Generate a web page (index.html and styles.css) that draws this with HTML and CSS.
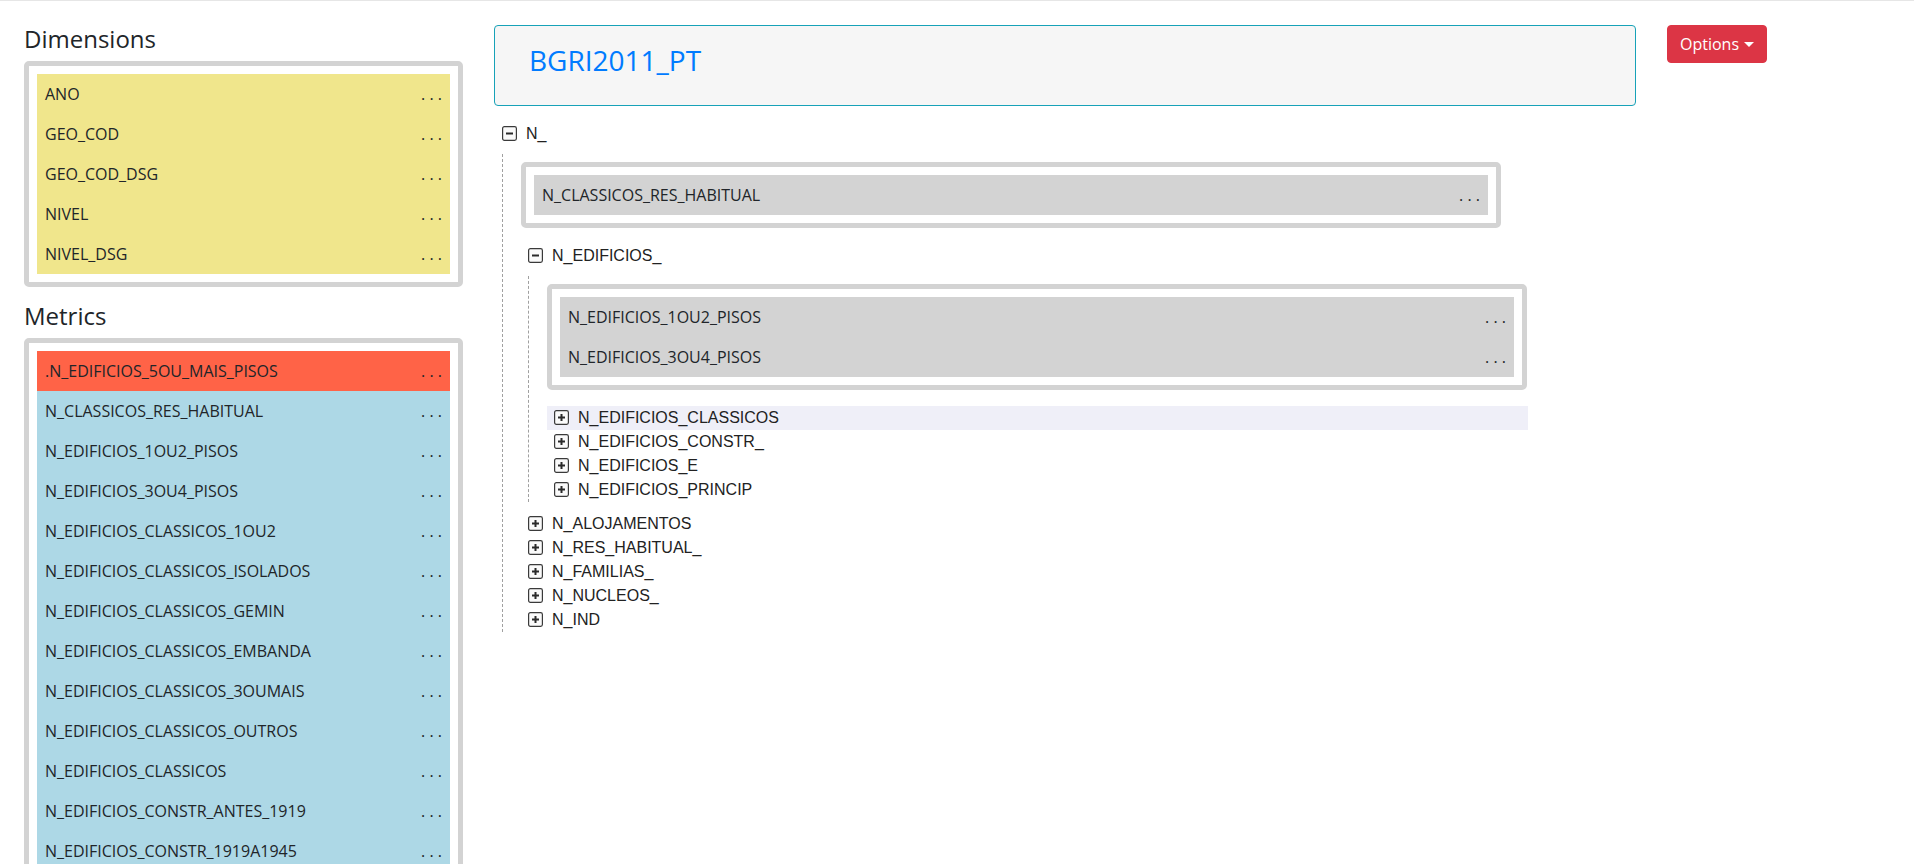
FILE: index.html
```html
<!DOCTYPE html>
<html lang="en">
<head>
<meta charset="utf-8">
<title>BGRI2011_PT</title>
<link rel="stylesheet" href="styles.css">
</head>
<body>
<div class="page">
  <aside class="side">
    <h4 class="side-title">Dimensions</h4>
    <div class="box">
      <div class="item dim"><span>ANO</span><span class="dots">. . .</span></div>
      <div class="item dim"><span>GEO_COD</span><span class="dots">. . .</span></div>
      <div class="item dim"><span>GEO_COD_DSG</span><span class="dots">. . .</span></div>
      <div class="item dim"><span>NIVEL</span><span class="dots">. . .</span></div>
      <div class="item dim"><span>NIVEL_DSG</span><span class="dots">. . .</span></div>
    </div>
    <h4 class="side-title">Metrics</h4>
    <div class="box">
      <div class="item sel"><span>.N_EDIFICIOS_5OU_MAIS_PISOS</span><span class="dots">. . .</span></div>
      <div class="item met"><span>N_CLASSICOS_RES_HABITUAL</span><span class="dots">. . .</span></div>
      <div class="item met"><span>N_EDIFICIOS_1OU2_PISOS</span><span class="dots">. . .</span></div>
      <div class="item met"><span>N_EDIFICIOS_3OU4_PISOS</span><span class="dots">. . .</span></div>
      <div class="item met"><span>N_EDIFICIOS_CLASSICOS_1OU2</span><span class="dots">. . .</span></div>
      <div class="item met"><span>N_EDIFICIOS_CLASSICOS_ISOLADOS</span><span class="dots">. . .</span></div>
      <div class="item met"><span>N_EDIFICIOS_CLASSICOS_GEMIN</span><span class="dots">. . .</span></div>
      <div class="item met"><span>N_EDIFICIOS_CLASSICOS_EMBANDA</span><span class="dots">. . .</span></div>
      <div class="item met"><span>N_EDIFICIOS_CLASSICOS_3OUMAIS</span><span class="dots">. . .</span></div>
      <div class="item met"><span>N_EDIFICIOS_CLASSICOS_OUTROS</span><span class="dots">. . .</span></div>
      <div class="item met"><span>N_EDIFICIOS_CLASSICOS</span><span class="dots">. . .</span></div>
      <div class="item met"><span>N_EDIFICIOS_CONSTR_ANTES_1919</span><span class="dots">. . .</span></div>
      <div class="item met"><span>N_EDIFICIOS_CONSTR_1919A1945</span><span class="dots">. . .</span></div>
      <div class="item met"><span>N_EDIFICIOS_CONSTR_1946A1960</span><span class="dots">. . .</span></div>
      <div class="item met"><span>N_EDIFICIOS_CONSTR_1961A1970</span><span class="dots">. . .</span></div>
      <div class="item met"><span>N_EDIFICIOS_CONSTR_1971A1980</span><span class="dots">. . .</span></div>
      <div class="item met"><span>N_EDIFICIOS_CONSTR_1981A1990</span><span class="dots">. . .</span></div>
      <div class="item met"><span>N_EDIFICIOS_CONSTR_1991A1995</span><span class="dots">. . .</span></div>
      <div class="item met"><span>N_EDIFICIOS_CONSTR_1996A2000</span><span class="dots">. . .</span></div>
      <div class="item met"><span>N_EDIFICIOS_CONSTR_2001A2005</span><span class="dots">. . .</span></div>
      <div class="item met"><span>N_EDIFICIOS_CONSTR_2006A2011</span><span class="dots">. . .</span></div>
      <div class="item met"><span>N_EDIFICIOS_ESTRUT_BETAO</span><span class="dots">. . .</span></div>
      <div class="item met"><span>N_EDIFICIOS_ESTRUT_COM_PLACA</span><span class="dots">. . .</span></div>
      <div class="item met"><span>N_EDIFICIOS_ESTRUT_SEM_PLACA</span><span class="dots">. . .</span></div>
      <div class="item met"><span>N_EDIFICIOS_ESTRUT_ADOBE_PEDRA</span><span class="dots">. . .</span></div>
      <div class="item met"><span>N_EDIFICIOS_ESTRUT_OUTRA</span><span class="dots">. . .</span></div>
      <div class="item met"><span>N_EDIFICIOS_EXCLUSIV_RESID</span><span class="dots">. . .</span></div>
      <div class="item met"><span>N_EDIFICIOS_PRINCIPAL_RESID</span><span class="dots">. . .</span></div>
      <div class="item met"><span>N_EDIFICIOS_PRINCIP_NAO_RESID</span><span class="dots">. . .</span></div>
      <div class="item met"><span>N_ALOJAMENTOS</span><span class="dots">. . .</span></div>
      <div class="item met"><span>N_ALOJAMENTOS_FAMILIARES</span><span class="dots">. . .</span></div>
      <div class="item met"><span>N_ALOJAMENTOS_FAM_CLASS_RHABITUAL</span><span class="dots">. . .</span></div>
      <div class="item met"><span>N_ALOJAMENTOS_FAM_CLASS_VAGOS</span><span class="dots">. . .</span></div>
      <div class="item met"><span>N_RES_HABITUAL_COM_AGUA</span><span class="dots">. . .</span></div>
      <div class="item met"><span>N_RES_HABITUAL_COM_RETRETE</span><span class="dots">. . .</span></div>
      <div class="item met"><span>N_RES_HABITUAL_COM_ESGOTOS</span><span class="dots">. . .</span></div>
      <div class="item met"><span>N_RES_HABITUAL_COM_BANHO</span><span class="dots">. . .</span></div>
      <div class="item met"><span>N_RES_HABITUAL_AREA_50</span><span class="dots">. . .</span></div>
      <div class="item met"><span>N_RES_HABITUAL_AREA_50_100</span><span class="dots">. . .</span></div>
      <div class="item met"><span>N_RES_HABITUAL_AREA_100_200</span><span class="dots">. . .</span></div>
      <div class="item met"><span>N_RES_HABITUAL_AREA_200</span><span class="dots">. . .</span></div>
      <div class="item met"><span>N_RES_HABITUAL_1_2_DIV</span><span class="dots">. . .</span></div>
      <div class="item met"><span>N_RES_HABITUAL_3_4_DIV</span><span class="dots">. . .</span></div>
      <div class="item met"><span>N_RES_HABITUAL_ESTAC_1</span><span class="dots">. . .</span></div>
      <div class="item met"><span>N_RES_HABITUAL_ESTAC_2</span><span class="dots">. . .</span></div>
      <div class="item met"><span>N_RES_HABITUAL_ESTAC_3</span><span class="dots">. . .</span></div>
      <div class="item met"><span>N_RES_HABITUAL_PROP_OCUP</span><span class="dots">. . .</span></div>
      <div class="item met"><span>N_RES_HABITUAL_ARREND</span><span class="dots">. . .</span></div>
      <div class="item met"><span>N_FAMILIAS_CLASSICAS</span><span class="dots">. . .</span></div>
      <div class="item met"><span>N_FAMILIAS_INSTITUCIONAIS</span><span class="dots">. . .</span></div>
      <div class="item met"><span>N_FAMILIAS_CLASSICAS_1OU2_PESS</span><span class="dots">. . .</span></div>
      <div class="item met"><span>N_FAMILIAS_CLASSICAS_3OU4_PESS</span><span class="dots">. . .</span></div>
      <div class="item met"><span>N_FAMILIAS_CLASSICAS_NPES65</span><span class="dots">. . .</span></div>
      <div class="item met"><span>N_FAMILIAS_CLASSICAS_NPES14</span><span class="dots">. . .</span></div>
      <div class="item met"><span>N_FAMILIAS_CLASSIC_SEM_DESEMP</span><span class="dots">. . .</span></div>
      <div class="item met"><span>N_FAMILIAS_CLASSIC_1DESEMPREG</span><span class="dots">. . .</span></div>
      <div class="item met"><span>N_FAMILIAS_CLASS_2MAIS_DESEMP</span><span class="dots">. . .</span></div>
      <div class="item met"><span>N_NUCLEOS_FAMILIARES</span><span class="dots">. . .</span></div>
      <div class="item met"><span>N_NUCLEOS_1FILH_NAO_CASADO</span><span class="dots">. . .</span></div>
      <div class="item met"><span>N_NUCLEOS_2FILH_NAO_CASADO</span><span class="dots">. . .</span></div>
      <div class="item met"><span>N_NUCLEOS_FILH_INF_6ANOS</span><span class="dots">. . .</span></div>
      <div class="item met"><span>N_NUCLEOS_FILH_INF_15ANOS</span><span class="dots">. . .</span></div>
      <div class="item met"><span>N_NUCLEOS_FILH_MAIS_15ANOS</span><span class="dots">. . .</span></div>
      <div class="item met"><span>N_INDIVIDUOS_PRESENT</span><span class="dots">. . .</span></div>
      <div class="item met"><span>N_INDIVIDUOS_PRESENT_H</span><span class="dots">. . .</span></div>
      <div class="item met"><span>N_INDIVIDUOS_PRESENT_M</span><span class="dots">. . .</span></div>
      <div class="item met"><span>N_INDIVIDUOS_RESIDENT</span><span class="dots">. . .</span></div>
      <div class="item met"><span>N_INDIVIDUOS_RESIDENT_H</span><span class="dots">. . .</span></div>
      <div class="item met"><span>N_INDIVIDUOS_RESIDENT_M</span><span class="dots">. . .</span></div>
      <div class="item met"><span>N_INDIVIDUOS_RESIDENT_0A4</span><span class="dots">. . .</span></div>
      <div class="item met"><span>N_INDIVIDUOS_RESIDENT_5A9</span><span class="dots">. . .</span></div>
      <div class="item met"><span>N_INDIVIDUOS_RESIDENT_10A13</span><span class="dots">. . .</span></div>
      <div class="item met"><span>N_INDIVIDUOS_RESIDENT_14A19</span><span class="dots">. . .</span></div>
      <div class="item met"><span>N_INDIVIDUOS_RESIDENT_20A24</span><span class="dots">. . .</span></div>
      <div class="item met"><span>N_INDIVIDUOS_RESIDENT_25A64</span><span class="dots">. . .</span></div>
      <div class="item met"><span>N_INDIVIDUOS_RESIDENT_65</span><span class="dots">. . .</span></div>
    </div>
  </aside>

  <main class="main">
    <div class="title-box">
      <h3 class="title">BGRI2011_PT</h3>
    </div>

    <div class="tree">
      <div class="node">
        <div class="row">
          <svg class="tog" width="15" height="15" viewBox="0 0 15 15"><rect x="0.6" y="0.6" width="13.8" height="13.8" rx="1.8" fill="#fafafa" stroke="#3a3a3a" stroke-width="1.2"/><path d="M4 7.5H11" stroke="#2a2a2a" stroke-width="2"/></svg>
          <span class="label">N_</span>
        </div>
        <div class="children">
          <div class="box tbox">
            <div class="item gry"><span>N_CLASSICOS_RES_HABITUAL</span><span class="dots">. . .</span></div>
          </div>
          <div class="node">
            <div class="row">
              <svg class="tog" width="15" height="15" viewBox="0 0 15 15"><rect x="0.6" y="0.6" width="13.8" height="13.8" rx="1.8" fill="#fafafa" stroke="#3a3a3a" stroke-width="1.2"/><path d="M4 7.5H11" stroke="#2a2a2a" stroke-width="2"/></svg>
              <span class="label">N_EDIFICIOS_</span>
            </div>
            <div class="children inner">
              <div class="box tbox">
                <div class="item gry"><span>N_EDIFICIOS_1OU2_PISOS</span><span class="dots">. . .</span></div>
                <div class="item gry"><span>N_EDIFICIOS_3OU4_PISOS</span><span class="dots">. . .</span></div>
              </div>
              <div class="row hover">
                <svg class="tog" width="15" height="15" viewBox="0 0 15 15"><rect x="0.6" y="0.6" width="13.8" height="13.8" rx="1.8" fill="#fafafa" stroke="#3a3a3a" stroke-width="1.2"/><path d="M4 7.5H11M7.5 4V11" stroke="#2a2a2a" stroke-width="2"/></svg>
                <span class="label">N_EDIFICIOS_CLASSICOS</span>
              </div>
              <div class="row">
                <svg class="tog" width="15" height="15" viewBox="0 0 15 15"><rect x="0.6" y="0.6" width="13.8" height="13.8" rx="1.8" fill="#fafafa" stroke="#3a3a3a" stroke-width="1.2"/><path d="M4 7.5H11M7.5 4V11" stroke="#2a2a2a" stroke-width="2"/></svg>
                <span class="label">N_EDIFICIOS_CONSTR_</span>
              </div>
              <div class="row">
                <svg class="tog" width="15" height="15" viewBox="0 0 15 15"><rect x="0.6" y="0.6" width="13.8" height="13.8" rx="1.8" fill="#fafafa" stroke="#3a3a3a" stroke-width="1.2"/><path d="M4 7.5H11M7.5 4V11" stroke="#2a2a2a" stroke-width="2"/></svg>
                <span class="label">N_EDIFICIOS_E</span>
              </div>
              <div class="row">
                <svg class="tog" width="15" height="15" viewBox="0 0 15 15"><rect x="0.6" y="0.6" width="13.8" height="13.8" rx="1.8" fill="#fafafa" stroke="#3a3a3a" stroke-width="1.2"/><path d="M4 7.5H11M7.5 4V11" stroke="#2a2a2a" stroke-width="2"/></svg>
                <span class="label">N_EDIFICIOS_PRINCIP</span>
              </div>
            </div>
          </div>
          <div class="row">
            <svg class="tog" width="15" height="15" viewBox="0 0 15 15"><rect x="0.6" y="0.6" width="13.8" height="13.8" rx="1.8" fill="#fafafa" stroke="#3a3a3a" stroke-width="1.2"/><path d="M4 7.5H11M7.5 4V11" stroke="#2a2a2a" stroke-width="2"/></svg>
            <span class="label">N_ALOJAMENTOS</span>
          </div>
          <div class="row">
            <svg class="tog" width="15" height="15" viewBox="0 0 15 15"><rect x="0.6" y="0.6" width="13.8" height="13.8" rx="1.8" fill="#fafafa" stroke="#3a3a3a" stroke-width="1.2"/><path d="M4 7.5H11M7.5 4V11" stroke="#2a2a2a" stroke-width="2"/></svg>
            <span class="label">N_RES_HABITUAL_</span>
          </div>
          <div class="row">
            <svg class="tog" width="15" height="15" viewBox="0 0 15 15"><rect x="0.6" y="0.6" width="13.8" height="13.8" rx="1.8" fill="#fafafa" stroke="#3a3a3a" stroke-width="1.2"/><path d="M4 7.5H11M7.5 4V11" stroke="#2a2a2a" stroke-width="2"/></svg>
            <span class="label">N_FAMILIAS_</span>
          </div>
          <div class="row">
            <svg class="tog" width="15" height="15" viewBox="0 0 15 15"><rect x="0.6" y="0.6" width="13.8" height="13.8" rx="1.8" fill="#fafafa" stroke="#3a3a3a" stroke-width="1.2"/><path d="M4 7.5H11M7.5 4V11" stroke="#2a2a2a" stroke-width="2"/></svg>
            <span class="label">N_NUCLEOS_</span>
          </div>
          <div class="row">
            <svg class="tog" width="15" height="15" viewBox="0 0 15 15"><rect x="0.6" y="0.6" width="13.8" height="13.8" rx="1.8" fill="#fafafa" stroke="#3a3a3a" stroke-width="1.2"/><path d="M4 7.5H11M7.5 4V11" stroke="#2a2a2a" stroke-width="2"/></svg>
            <span class="label">N_IND</span>
          </div>
        </div>
      </div>
    </div>
  </main>

  <div class="actions">
    <button class="btn-options" type="button">Options<span class="caret"></span></button>
  </div>
</div>
</body>
</html>
```

FILE: styles.css
```css
html {
  font-size: 16px;
  overflow-y: scroll;
}

body {
  margin: 0;
  font-family: "Open Sans", "Liberation Sans", sans-serif;
  font-size: 16px;
  line-height: 1.5;
  color: #212529;
  background: #fff;
  border-top: 1px solid #e6e6e6;
}

::-webkit-scrollbar {
  width: 12px;
}
::-webkit-scrollbar-track {
  background: #f1f1f1;
}
::-webkit-scrollbar-thumb {
  background: #c1c1c1;
  border-left: 2px solid #f1f1f1;
}

.page {
  display: flex;
  align-items: flex-start;
  padding: 24px 0 0 24px;
}

/* ---------- left column ---------- */
.side {
  width: 439px;
  flex: none;
}

.side-title {
  margin: 0 0 7px;
  font-size: 24px;
  font-weight: 400;
  line-height: 1.2;
  color: #212529;
}

.box {
  border: 5px solid #d3d3d3;
  border-radius: 5px;
  padding: 8px;
  margin-bottom: 15px;
}

.item {
  display: flex;
  justify-content: space-between;
  align-items: baseline;
  padding: 8px;
  line-height: 24px;
  font-size: 16px;
  color: #212529;
  white-space: nowrap;
}

.dots {
  color: #212529;
}

.dim { background: #f0e68c; }
.sel { background: #ff6347; }
.met { background: #add8e6; }
.gry { background: #d3d3d3; }

/* ---------- main column ---------- */
.main {
  width: 1142px;
  flex: none;
  margin-left: 31px;
}

.title-box {
  border: 1px solid #17a2b8;
  border-radius: 4px;
  background: #f6f6f6;
  padding: 18px 34px 19px;
  margin-bottom: 16px;
}

.title {
  margin: 0 0 8px;
  font-size: 28px;
  font-weight: 400;
  line-height: 1.2;
  color: #007bff;
}

/* ---------- tree ---------- */
.tree {
  padding-left: 1px;
  font-family: "Liberation Sans", Arial, sans-serif;
  font-size: 16px;
  color: #222;
}

.row {
  display: flex;
  align-items: center;
  height: 24px;
  padding-left: 7px;
}

.row.hover {
  background: #efeff8;
}

.tog {
  flex: none;
  display: block;
  margin-right: 9px;
}

.label {
  line-height: 24px;
  white-space: nowrap;
}

.children {
  width: 980px;
  margin: 8px 0 0 7px;
  padding: 8px 0 0 18px;
  border-left: 1px dashed #a0a0a0;
}

.children.inner {
  width: 981px;
  margin-bottom: 10px;
}

.tbox {
  font-family: "Open Sans", "Liberation Sans", sans-serif;
  width: 954px;
  margin-bottom: 16px;
}

/* ---------- actions ---------- */
.actions {
  margin-left: 31px;
}

.btn-options {
  display: inline-flex;
  align-items: center;
  font-family: "Open Sans", "Liberation Sans", sans-serif;
  font-size: 16px;
  line-height: 24px;
  color: #fff;
  background: #dc3545;
  border: 1px solid #dc3545;
  border-radius: 4px;
  padding: 6px 12px;
  cursor: pointer;
}

.caret {
  display: inline-block;
  margin-left: 5px;
  border-top: 5px solid #fff;
  border-left: 5px solid transparent;
  border-right: 5px solid transparent;
  margin-top: 1px;
}
```
